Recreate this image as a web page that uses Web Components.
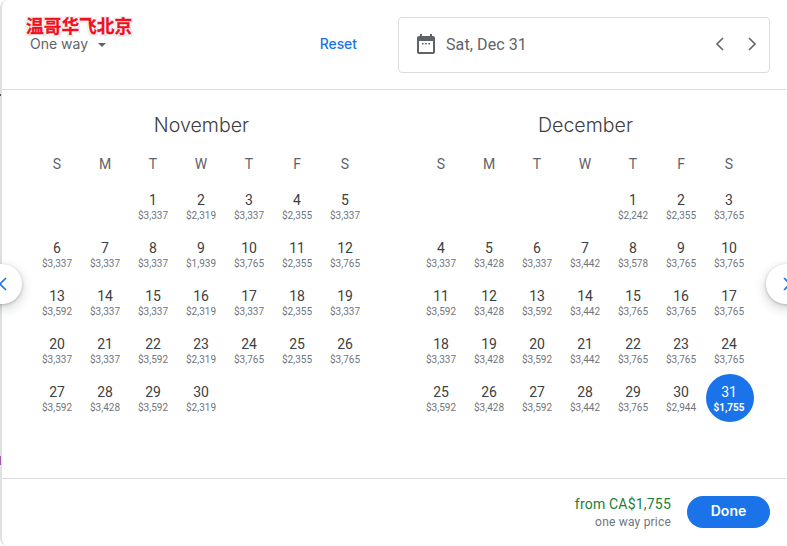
<!DOCTYPE html>
<html><head><meta charset="utf-8">
<style>
html,body{margin:0;padding:0;background:#fff;overflow:hidden}
body{font-family:Roboto,"Liberation Sans",sans-serif}
</style></head>
<body>
<flight-dialog>
  <overlay-title slot="title">温哥华飞北京</overlay-title>
  <trip-select slot="trip">One way</trip-select>
  <date-field slot="date">Sat, Dec 31</date-field>
  <month-cal slot="months" name="November" lead="2" prices="3337,2319,3337,2355,3337,3337,3337,3337,1939,3765,2355,3765,3592,3337,3337,2319,3337,2355,3337,3337,3337,3592,2319,3765,2355,3765,3592,3428,3592,2319"></month-cal>
  <month-cal slot="months" name="December" lead="4" selected="31" prices="2242,2355,3765,3337,3428,3337,3442,3578,3765,3765,3592,3428,3592,3442,3765,3765,3765,3337,3428,3592,3442,3765,3765,3765,3592,3428,3592,3442,3765,2944,1755"></month-cal>
</flight-dialog>
<script>
function def(name,html,init){
  customElements.define(name,class extends HTMLElement{
    constructor(){super();this.attachShadow({mode:'open'}).innerHTML=html;}
    connectedCallback(){if(init)init.call(this);}
  });
}
const chev=(d,c,s,w)=>`<svg width="${s}" height="${s}" viewBox="0 0 24 24" fill="none" stroke="${c}" stroke-width="${w}"><polyline points="${d==='l'?'15,6 9,12 15,18':'9,6 15,12 9,18'}"/></svg>`;

def('overlay-title',`<style>:host{display:block;font:700 17.7px/18px "Noto Sans CJK SC",sans-serif;color:#ee1122;white-space:nowrap;-webkit-text-stroke:.35px #ee1122;
text-shadow:1.5px 0 1px #fff,-1.5px 0 1px #fff,0 1.5px 1px #fff,0 -1.5px 1px #fff,1.5px 1.5px 1px #d8d8d8,-1.5px -1.5px 1px #d8d8d8,1.5px -1.5px 1px #d8d8d8,-1.5px 1.5px 1px #d8d8d8}</style><slot></slot>`);

def('trip-select',`<style>:host{display:flex;align-items:center;gap:10px;font:400 14px/20px Inter,Roboto,sans-serif;color:#5f6368}
i{width:0;height:0;border:4px solid transparent;border-top-color:#5f6368;border-bottom:0;margin-top:2px}</style><slot></slot><i></i>`);

def('date-field',`<style>:host{display:flex;align-items:center;box-sizing:border-box;width:372px;height:56px;border:1px solid #dadce0;border-radius:4px;padding:0 5px 2px 15px;color:#5f6368;font-size:16px;font-family:Roboto,sans-serif}
.t{flex:1;margin-left:8px;letter-spacing:.1px}
.n{display:flex;gap:8px}
.n span{display:flex;width:24px;height:24px}
svg{display:block}</style>
<svg width="24" height="24" viewBox="0 0 24 24" fill="#5f6368"><path d="M19 4h-1V2h-2v2H8V2H6v2H5c-1.1 0-2 .9-2 2v14c0 1.1.9 2 2 2h14c1.1 0 2-.9 2-2V6c0-1.1-.9-2-2-2zm0 16H5V9h14v11z"/><path d="M8 11h1.6v1.6H8zM11.2 11h1.6v1.6h-1.6zM14.4 11H16v1.6h-1.6z"/></svg>
<span class="t"><slot></slot></span>
<div class="n"><span>${chev('l','#5f6368',24,1.6)}</span><span>${chev('r','#5f6368',24,1.6)}</span></div>`);

def('month-cal',`<style>:host{display:block;width:336px;font-family:Roboto,sans-serif}
h2{margin:0;height:24px;font:300 19.6px/24px Inter,Roboto,sans-serif;color:#3c4043;text-align:center;padding-right:1px;position:relative;top:-1px}
.g{display:grid;grid-template-columns:repeat(7,48px)}
.w{margin-top:16px;height:20px;margin-bottom:8px}
.w span{font-size:14px;line-height:20px;color:#5f6368;text-align:center;padding-right:2px}
.d{height:48px;display:flex;flex-direction:column;align-items:center;justify-content:center;box-sizing:border-box;padding-right:2px}
.d b{font-weight:400;font-size:14px;line-height:18px;color:#3c4043}
.d small{font-size:10px;line-height:12px;color:#70757a;white-space:nowrap;margin-top:1px}
.sel{background:#1a73e8;border-radius:50%}
.sel b{color:#fff}.sel small{color:#fff;font-weight:700}</style>
<h2></h2><div class="g w"></div><div class="g days"></div>`,function(){
  const r=this.shadowRoot;
  r.querySelector('h2').textContent=this.getAttribute('name');
  r.querySelector('.w').innerHTML=[...'SMTWTFS'].map(c=>`<span>${c}</span>`).join('');
  const lead=+this.getAttribute('lead'),sel=+this.getAttribute('selected')||0;
  const p=this.getAttribute('prices').split(',');
  let h='';for(let i=0;i<lead;i++)h+='<div></div>';
  p.forEach((v,i)=>{const n=i+1,s='$'+v[0]+','+v.slice(1);
    h+=`<div class="d${n===sel?' sel':''}"><b>${n}</b><small>${s}</small></div>`;});
  r.querySelector('.days').innerHTML=h;
});

def('side-nav',`<style>:host{position:absolute;top:264px;width:40px;height:40px;border-radius:50%;background:#fff;box-shadow:0 1px 3px rgba(60,64,67,.3),0 4px 8px 3px rgba(60,64,67,.15);display:flex;align-items:center;justify-content:center}</style><slot></slot>`);

def('flight-dialog',`<style>:host{display:block;position:relative;width:787px;height:546px;overflow:hidden;background:#fff}
.sheet{box-sizing:border-box;width:786px;height:546px;border-left:2px solid #e0e0e0;border-radius:8px 0 0 8px;display:flex;flex-direction:column}
header{height:89px;box-sizing:border-box;display:flex;align-items:flex-start}
.left{width:396px;box-sizing:border-box;padding:34px 41px 0 28px;display:flex;justify-content:space-between}
.reset{font:500 13.9px/20px Inter,Roboto,sans-serif;color:#1a73e8}
.df{margin-top:17px}
hr{margin:0;border:0;height:1px;background:#dadce0}
.m{flex:1;display:flex;gap:48px;padding:24px 0 0 32px}
footer{height:67px;display:flex;justify-content:flex-end;align-items:center;gap:16px;padding-right:16px;box-sizing:border-box;padding-bottom:1px}
.pr{text-align:right}
.a{font-size:14px;line-height:20px;color:#188038;letter-spacing:.2px}
.b{font-size:12px;line-height:16px;color:#70757a;letter-spacing:.2px}
.done{width:83px;height:32px;border-radius:16px;background:#1a73e8;color:#fff;font:600 14px/30px Inter,Roboto,sans-serif;text-align:center}
.ttl{position:absolute;left:26px;top:16px}
.mark{position:absolute;left:0;width:1px}
side-nav svg{display:block}</style>
<div class="sheet">
<header><div class="left"><slot name="trip"></slot><span class="reset">Reset</span></div><div class="df"><slot name="date"></slot></div></header>
<hr>
<div class="m"><slot name="months"></slot></div>
<hr>
<footer><div class="pr"><div class="a">from CA$1,755</div><div class="b">one way price</div></div><div class="done">Done</div></footer>
</div>
<div class="mark" style="top:94px;height:2px;background:#555"></div>
<div class="mark" style="top:456px;height:9px;background:#9c5ca8"></div>
<div class="ttl"><slot name="title"></slot></div>
<side-nav style="left:-18px"><span style="margin-left:2px;display:flex">${chev('l','#1a73e8',24,1.6)}</span></side-nav>
<side-nav style="left:766px"><span style="display:flex;margin-right:-2px;margin-left:0">${chev('r','#1a73e8',24,1.6)}</span></side-nav>`);
</script>
</body></html>
